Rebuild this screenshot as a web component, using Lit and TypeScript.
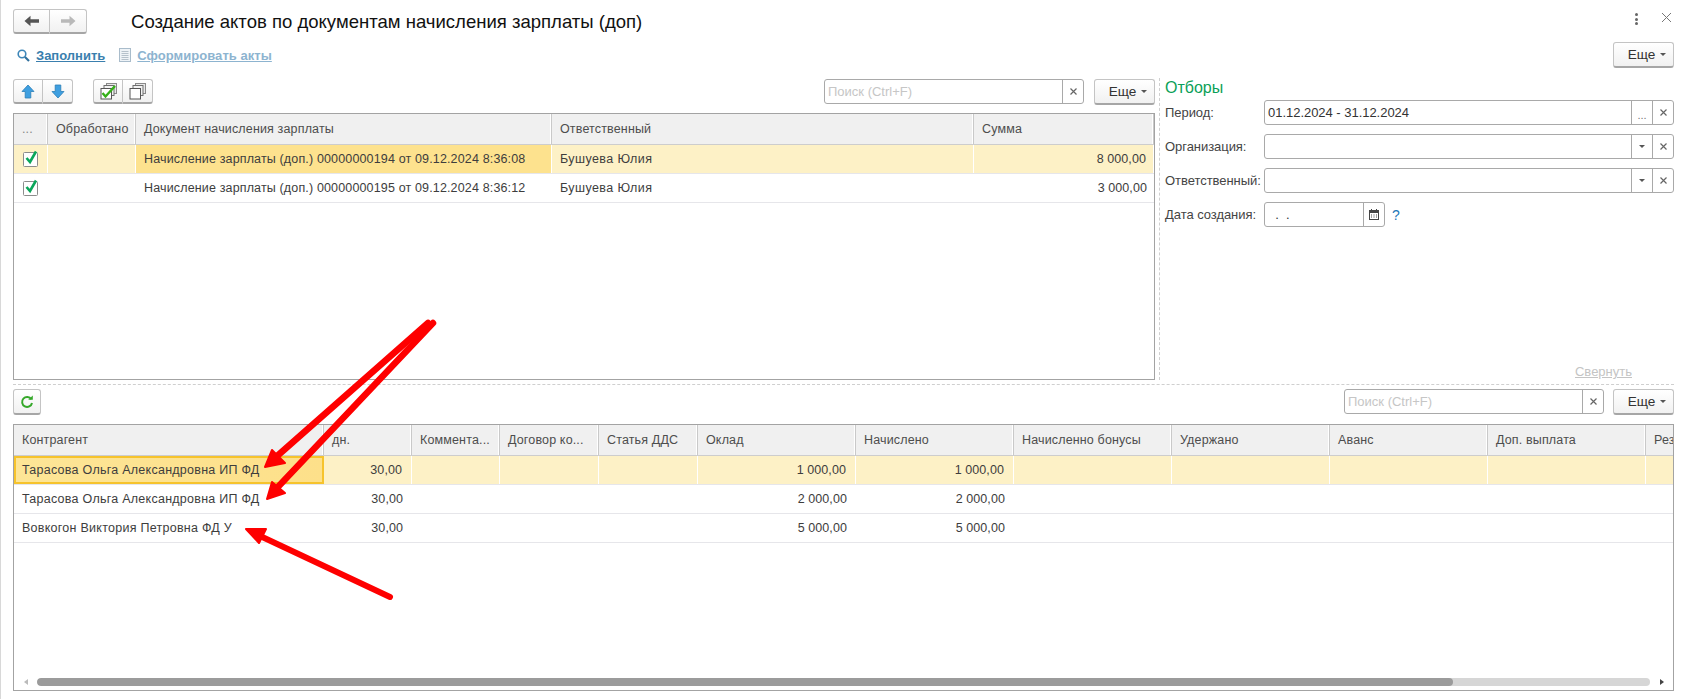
import { LitElement, html, css, svg } from "lit";
import { customElement } from "lit/decorators.js";

const backIcon = (c: string) => html`<svg width="16" height="12" viewBox="0 0 16 12"><path d="M0.5 6 L6.5 0.8 V4.2 H15 V7.8 H6.5 V11.2 Z" fill=${c}/></svg>`;
const fwdIcon = (c: string) => html`<svg width="16" height="12" viewBox="0 0 16 12"><path d="M15.5 6 L9.5 0.8 V4.2 H1 V7.8 H9.5 V11.2 Z" fill=${c}/></svg>`;
const upIcon = html`<svg width="14" height="15" viewBox="0 0 14 15"><path d="M7 1 L13 7.5 H9.8 V14 H4.2 V7.5 H1 Z" fill="#3f9fe0" stroke="#2b7fb8" stroke-width="0.8"/></svg>`;
const downIcon = html`<svg width="14" height="15" viewBox="0 0 14 15"><path d="M7 14 L13 7.5 H9.8 V1 H4.2 V7.5 H1 Z" fill="#3f9fe0" stroke="#2b7fb8" stroke-width="0.8"/></svg>`;
const stackCheck = html`<svg width="17" height="17" viewBox="0 0 17 17">
  <rect x="6.5" y="0.5" width="10" height="10" fill="#e8e8e8" stroke="#8a8a8a"/>
  <rect x="4" y="2.5" width="10" height="10" fill="#f2f2f2" stroke="#6f6f6f"/>
  <rect x="1" y="5.5" width="10.5" height="10.5" fill="#fff" stroke="#555"/>
  <path d="M2.5 10 L5.5 13.5 L15 3" fill="none" stroke="#35b018" stroke-width="2.4"/>
</svg>`;
const stackEmpty = html`<svg width="17" height="17" viewBox="0 0 17 17">
  <rect x="6.5" y="0.5" width="10" height="10" fill="#e8e8e8" stroke="#8a8a8a"/>
  <rect x="4" y="2.5" width="10" height="10" fill="#f2f2f2" stroke="#6f6f6f"/>
  <rect x="1" y="5.5" width="10.5" height="10.5" fill="#fff" stroke="#555"/>
</svg>`;
const searchIcon = html`<svg width="13" height="13" viewBox="0 0 13 13"><circle cx="5" cy="5" r="3.8" fill="none" stroke="#3d86b8" stroke-width="1.6"/><path d="M8 8 L12 12" stroke="#2f6f9c" stroke-width="2.2"/></svg>`;
const docIcon = html`<svg width="12" height="14" viewBox="0 0 12 14"><rect x="0.5" y="0.5" width="11" height="13" fill="#eef3f7" stroke="#a9bccb"/><path d="M2.5 3.5H9.5M2.5 5.5H9.5M2.5 7.5H9.5M2.5 9.5H9.5M2.5 11.5H9.5" stroke="#b5c1cb" stroke-width="1"/></svg>`;
const refreshIcon = html`<svg width="14" height="14" viewBox="0 0 14 14"><path d="M11.3 4.2 A5 5 0 1 0 12 8" fill="none" stroke="#35a82a" stroke-width="2"/><path d="M8.2 4.8 H12.8 V0.6 Z" fill="#35a82a"/></svg>`;
const calIcon = html`<svg width="10" height="11" viewBox="0 0 10 11"><rect x="0.5" y="1.5" width="9" height="9" fill="#fff" stroke="#444"/><rect x="0" y="1" width="10" height="3" fill="#444"/><path d="M2.5 0V2M7.5 0V2" stroke="#444"/><path d="M2 6H3M4.5 6H5.5M7 6H8M2 8H3M4.5 8H5.5M7 8H8" stroke="#444"/></svg>`;
const checkBox = html`<svg class="chk" width="16" height="18" viewBox="0 0 16 18">
  <rect x="0.5" y="3.5" width="14" height="14" rx="1" fill="#fff" stroke="#8c8c8c"/>
  <path d="M3.5 9 L7 13 L13 2.5" fill="none" stroke="#0aa65a" stroke-width="2.6"/>
</svg>`;
const closeX = html`<svg width="9" height="9" viewBox="0 0 9 9"><path d="M1.5 1.5L7.5 7.5M7.5 1.5L1.5 7.5" stroke="#666" stroke-width="1.2"/></svg>`;
const caret = html`<span class="caret"></span>`;

type Cell = { t?: string; right?: boolean; hl?: boolean; cur?: boolean; check?: boolean; wide?: boolean };

const topCols = [34, 88, 416, 422, 180];
const botCols = [310, 88, 88, 99, 99, 158, 158, 158, 158, 158, 158, 29];

const topHead = ["...", "Обработано", "Документ начисления зарплаты", "Ответственный", "Сумма"];
const botHead = ["Контрагент", "дн.", "Коммента...", "Договор ко...", "Статья ДДС", "Оклад", "Начислено", "Начисленно бонусы", "Удержано", "Аванс", "Доп. выплата", "Резерв"];

const topRows: { cells: Cell[]; sel?: boolean }[] = [
  { sel: true, cells: [{ check: true }, {}, { t: "Начисление зарплаты (доп.) 00000000194 от 09.12.2024 8:36:08", hl: true }, { t: "Бушуева Юлия", wide: true }, { t: "8 000,00", right: true }] },
  { cells: [{ check: true }, {}, { t: "Начисление зарплаты (доп.) 00000000195 от 09.12.2024 8:36:12" }, { t: "Бушуева Юлия", wide: true }, { t: "3 000,00", right: true }] },
];

const botRow = (name: string, okl: string, cur = false, sel = false) => ({
  sel,
  cells: [
    { t: name, cur, wide: true },
    { t: "30,00", right: true },
    {}, {}, {},
    { t: okl, right: true },
    { t: okl, right: true },
    {}, {}, {}, {}, {},
  ] as Cell[],
});
const botRows = [
  botRow("Тарасова Ольга Александровна ИП ФД", "1 000,00", true, true),
  botRow("Тарасова Ольга Александровна ИП ФД", "2 000,00"),
  botRow("Вовкогон Виктория Петровна ФД У", "5 000,00"),
];

@customElement("app-root")
export class AppRoot extends LitElement {
  static styles = css`
    :host {
      display: block;
      position: relative;
      width: 1687px;
      height: 699px;
      box-sizing: border-box;
      background: #fff;
      font-family: "Liberation Sans", Arial, sans-serif;
      font-size: 12.5px;
      color: #3d3d3d;
      overflow: hidden;
    }
    .page {
      height: 699px;
      box-sizing: border-box;
      border-left: 1px solid #d8d8d8;
      padding: 0 13px 0 12px;
      display: flex;
      flex-direction: column;
    }
    .titlebar { height: 42px; display: flex; align-items: flex-start; padding-top: 9px; box-sizing: border-box; }
    .title { margin-left: 44px; font-size: 18.55px; line-height: 25px; color: #111; white-space: nowrap; }
    .winctl { margin-left: auto; display: flex; align-items: center; height: 20px; }
    .kebab { display: flex; flex-direction: column; gap: 1.5px; margin-right: 23px; }
    .kebab i { width: 3px; height: 3px; background: #666; border-radius: 50%; display: block; }
    .winx { margin-right: 2px; }

    .cmdbar { height: 26px; display: flex; align-items: center; margin-bottom: 11px; }
    .lnk { display: flex; align-items: center; gap: 6px; font-weight: bold; font-size: 13px; text-decoration: underline; color: #3a7fae; }
    .lnk.first { margin-left: 4px; }
    .lnk.off { color: #8db4d0; margin-left: 14px; font-weight: bold; letter-spacing: 0.04px; }
    .lnk.off { gap: 6px; }
    .lnk svg { display: block; }
    .push { margin-left: auto; }

    .btn {
      box-sizing: border-box;
      display: flex;
      align-items: center;
      justify-content: center;
      border: 1px solid #c4c4c4;
      border-bottom: 2px solid #a6a6a6;
      border-radius: 3px;
      background: linear-gradient(#ffffff, #f1f1f1);
    }
    .more { width: 61px; height: 26px; color: #333; font-size: 13.6px; gap: 5px; padding-left: 7px; }
    .caret { width: 0; height: 0; border-left: 3.5px solid transparent; border-right: 3.5px solid transparent; border-top: 3.5px solid #555; display: block; }
    .grp { display: flex; }
    .grp .btn { height: 25px; }
    .grp .btn:first-child { border-right: 1px solid #c4c4c4; border-radius: 3px 0 0 3px; }
    .grp .btn:last-child { border-left: 0; border-radius: 0 3px 3px 0; }
    .nav .btn:first-child { width: 37px; }
    .nav .btn:last-child { width: 37px; }
    .pair .btn:first-child { width: 30px; }
    .pair .btn:last-child { width: 30px; }
    .refresh { width: 28px; height: 26px; }

    .upper { display: grid; grid-template-columns: 1142px 1fr; height: 301px; }
    .left { display: flex; flex-direction: column; min-width: 0; }
    .toolbar { display: flex; align-items: flex-start; gap: 20px; margin-bottom: 9px; height: 25px; flex: none; }
    .lower .toolbar { height: 26px; gap: 0; }
    .search {
      box-sizing: border-box;
      width: 260px; height: 25px;
      border: 1px solid #a9a9a9; border-radius: 3px;
      display: flex; align-items: stretch;
      color: #c6c6c6; font-size: 13px; background: #fff;
    }
    .search .ph { flex: 1; padding-left: 3px; line-height: 23px; }
    .search .x, .field .x { width: 20px; border-left: 1px solid #a9a9a9; display: flex; align-items: center; justify-content: center; flex: none; }
    .toolbar .gap9 { margin-left: 10px; }
    .lower .gap9 { margin-left: 9px; }
    .tight { margin-left: -10px; }

    .right {
      margin-left: 4px;
      border-left: 1px dashed #cfcfcf;
      padding-left: 5px;
      display: flex;
      flex-direction: column;
      margin-top: -1px;
    }
    .heading { color: #0b9f58; font-size: 16px; line-height: 20px; height: 22px; margin-bottom: 0; }
    .filters { display: grid; grid-template-columns: 99px 1fr; row-gap: 9px; align-items: center; }
    .filters label { color: #444; font-size: 13px; white-space: nowrap; letter-spacing: -0.05px; }
    .field {
      box-sizing: border-box; height: 25px;
      border: 1px solid #a9a9a9; border-radius: 3px;
      display: flex; align-items: stretch; background: #fff;
    }
    .field .val { flex: 1; padding-left: 3px; line-height: 23px; font-size: 13px; color: #333; white-space: pre; letter-spacing: -0.03px; }
    .field .dots { align-items: flex-end; color: #777; font-size: 11px; line-height: 17px; }
    .datewrap { display: flex; align-items: center; gap: 8px; }
    .datewrap .field { width: 121px; }
    .q { color: #1d78b8; font-size: 14px; margin-left: -1px; }
    .collapse { margin-top: auto; margin-right: 42px; align-self: flex-end; color: #c4c4c4; text-decoration: underline; font-size: 13px; line-height: 16px; }

    .hdash { border-top: 1px dashed #cfcfcf; margin: 4px 0 4px; flex: none; }
    .lower { display: flex; flex-direction: column; }

    .table {
      flex: 1;
      box-sizing: border-box;
      border: 1px solid #a3a3a3;
      display: flex; flex-direction: column;
      overflow: hidden;
      background: #fff;
    }
    .lower .table { flex: none; height: 267px; }
    .row { display: grid; flex: none; }
    .hd { height: 31px; background: #f0f0f0; border-bottom: 1px solid #cdcdcd; box-sizing: border-box; }
    .hd > div {
      box-sizing: border-box; padding-left: 8px; line-height: 31px;
      border-right: 1px solid #c9c9c9; box-shadow: inset -1px 0 0 #fff;
      color: #4d4d4d; white-space: nowrap; overflow: hidden; letter-spacing: 0.15px;
    }
    .hd > div.dots { color: #888; }
    .r { height: 29px; border-bottom: 1px solid #e6e6ea; box-sizing: border-box; }
    .r > div {
      box-sizing: border-box; padding: 0 7px 0 8px; line-height: 29px; white-space: nowrap; overflow: hidden;
      color: #3d3d3d; letter-spacing: 0.15px;
    }
    .r.sel { background: #fdf1c6; }
    .r.sel > div { border-right: 1px solid #fff; }
    .r > .num { text-align: right; letter-spacing: 0.08px; }
    .lower .r > .num { padding-right: 9px; }
    .r > .wide { letter-spacing: 0.26px; }
    .left .r > .wide { letter-spacing: 0.42px; }
    .r > .hl { background: #fde28e; }
    .r.sel > .cur { background: linear-gradient(90deg, #fde596, #fde08a); border: 2px solid #f6c32c; line-height: 25px; padding-left: 6px; }
    .cellck { position: relative; }
    .chk { position: absolute; left: 9px; top: 4px; display: block; }

    .spacer { flex: 1; }
    .scroll { flex: none; display: flex; align-items: center; height: 8px; margin-bottom: 4px; }
    .arrowbox { width: 23px; flex: none; display: flex; justify-content: center; }
    .tri-l { width: 0; height: 0; border-top: 3.5px solid transparent; border-bottom: 3.5px solid transparent; border-right: 4px solid #bbb; }
    .tri-r { width: 0; height: 0; border-top: 3.5px solid transparent; border-bottom: 3.5px solid transparent; border-left: 4px solid #444; }
    .track { flex: 1; height: 8px; border-radius: 4px; background: #d6d6d6; overflow: hidden; }
    .thumb { height: 8px; background: #9b9b9b; border-radius: 4px; }

    .overlay { position: absolute; left: 0; top: 0; pointer-events: none; }
  `;

  private table(cols: number[], head: string[], rows: { cells: Cell[]; sel?: boolean }[], scroll: boolean) {
    const tpl = cols.map((c) => c + "px").join(" ");
    return html`<div class="table">
      <div class="row hd" style="grid-template-columns:${tpl}">
        ${head.map((h) => html`<div class=${h === "..." ? "dots" : ""}>${h}</div>`)}
      </div>
      ${rows.map(
        (r) => html`<div class="row r ${r.sel ? "sel" : ""}" style="grid-template-columns:${tpl}">
          ${r.cells.map(
            (c) => html`<div class="${c.right ? "num" : ""} ${c.hl ? "hl" : ""} ${c.cur ? "cur" : ""} ${c.check ? "cellck" : ""} ${c.wide ? "wide" : ""}">
              ${c.check ? checkBox : c.t ?? ""}
            </div>`
          )}
        </div>`
      )}
      <div class="spacer"></div>
      ${scroll
        ? html`<div class="scroll">
            <div class="arrowbox"><div class="tri-l"></div></div>
            <div class="track"><div class="thumb" style="width:${(1416 / 1613) * 100}%"></div></div>
            <div class="arrowbox"><div class="tri-r"></div></div>
          </div>`
        : ""}
    </div>`;
  }

  private search() {
    return html`<div class="search"><div class="ph">Поиск (Ctrl+F)</div><div class="x">${closeX}</div></div>`;
  }
  private more() {
    return html`<div class="btn more gap9">Еще ${caret}</div>`;
  }

  render() {
    return html`
      <div class="page">
        <div class="titlebar">
          <div class="grp nav">
            <div class="btn">${backIcon("#555")}</div>
            <div class="btn">${fwdIcon("#b9b9b9")}</div>
          </div>
          <div class="title">Создание актов по документам начисления зарплаты (доп)</div>
          <div class="winctl">
            <div class="kebab"><i></i><i></i><i></i></div>
            <div class="winx"><svg width="11" height="11" viewBox="0 0 11 11"><path d="M1 1L10 10M10 1L1 10" stroke="#777" stroke-width="1"/></svg></div>
          </div>
        </div>
        <div class="cmdbar">
          <div class="lnk first">${searchIcon}<span>Заполнить</span></div>
          <div class="lnk off">${docIcon}<span>Сформировать акты</span></div>
          <div class="btn more push">Еще ${caret}</div>
        </div>
        <div class="upper">
          <div class="left">
            <div class="toolbar">
              <div class="grp pair"><div class="btn">${upIcon}</div><div class="btn">${downIcon}</div></div>
              <div class="grp pair"><div class="btn">${stackCheck}</div><div class="btn">${stackEmpty}</div></div>
              <div class="push">${this.search()}</div>
              <div class="btn more tight">Еще ${caret}</div>
            </div>
            ${this.table(topCols, topHead, topRows, false)}
          </div>
          <div class="right">
            <div class="heading">Отборы</div>
            <div class="filters">
              <label>Период:</label>
              <div class="field"><div class="val">01.12.2024 - 31.12.2024</div><div class="x dots">...</div><div class="x">${closeX}</div></div>
              <label>Организация:</label>
              <div class="field"><div class="val"></div><div class="x">${caret}</div><div class="x">${closeX}</div></div>
              <label>Ответственный:</label>
              <div class="field"><div class="val"></div><div class="x">${caret}</div><div class="x">${closeX}</div></div>
              <label>Дата создания:</label>
              <div class="datewrap">
                <div class="field"><div class="val">  .  .</div><div class="x">${calIcon}</div></div>
                <span class="q">?</span>
              </div>
            </div>
            <div class="collapse">Свернуть</div>
          </div>
        </div>
        <div class="hdash"></div>
        <div class="lower">
          <div class="toolbar">
            <div class="btn refresh">${refreshIcon}</div>
            <div class="push">${this.search()}</div>
            ${this.more()}
          </div>
          ${this.table(botCols, botHead, botRows, true)}
        </div>
      </div>
      <svg class="overlay" width="1687" height="699" viewBox="0 0 1687 699">
        ${svg`
          <g fill="#fe0000" stroke="#fe0000" stroke-linejoin="round">
            <path d="M428 323 L276 457" stroke-width="6.5" stroke-linecap="round" fill="none"/>
            <path d="M265 467 L272 450 L285 463 Z" stroke-width="2"/>
            <path d="M433 323 L276 489" stroke-width="6.5" stroke-linecap="round" fill="none"/>
            <path d="M267 499 L272 482 L285 493 Z" stroke-width="2"/>
            <path d="M390 597 L258 535" stroke-width="6" stroke-linecap="round" fill="none"/>
            <path d="M246 529 L266 529 L259 543 Z" stroke-width="2"/>
          </g>
        `}
      </svg>
    `;
  }
}
